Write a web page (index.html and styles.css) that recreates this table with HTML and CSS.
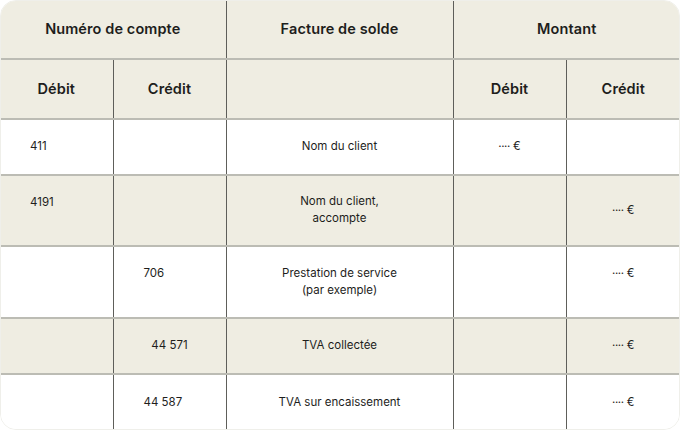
FILE: index.html
```html
<!DOCTYPE html>
<html lang="fr">
<head>
<meta charset="utf-8">
<link rel="stylesheet" href="styles.css">
</head>
<body>
<div class="card">
<table class="ledger">
  <colgroup>
    <col class="c1"><col class="c2"><col class="c3"><col class="c4"><col class="c5">
  </colgroup>
  <thead>
    <tr class="h1">
      <th colspan="2">Numéro de compte</th>
      <th class="vl">Facture de solde</th>
      <th colspan="2" class="vl">Montant</th>
    </tr>
    <tr class="h2">
      <th>Débit</th>
      <th class="vl">Crédit</th>
      <th class="vl"></th>
      <th class="vl">Débit</th>
      <th class="vl">Crédit</th>
    </tr>
  </thead>
  <tbody>
    <tr class="r1 white">
      <td class="left">411</td>
      <td class="vl"></td>
      <td class="vl center">Nom du client</td>
      <td class="vl center"><span class="dots">····</span> €</td>
      <td class="vl"></td>
    </tr>
    <tr class="r2 beige">
      <td class="left top">4191</td>
      <td class="vl"></td>
      <td class="vl center">Nom du client,<br>accompte</td>
      <td class="vl"></td>
      <td class="vl center"><span class="dots">····</span> €</td>
    </tr>
    <tr class="r3 white">
      <td></td>
      <td class="vl left top">706</td>
      <td class="vl center">Prestation de service<br>(par exemple)</td>
      <td class="vl"></td>
      <td class="vl center top"><span class="dots">····</span> €</td>
    </tr>
    <tr class="r4 beige">
      <td></td>
      <td class="vl center">44 571</td>
      <td class="vl center">TVA collectée</td>
      <td class="vl"></td>
      <td class="vl center"><span class="dots">····</span> €</td>
    </tr>
    <tr class="r5 white last">
      <td></td>
      <td class="vl left">44 587</td>
      <td class="vl center">TVA sur encaissement</td>
      <td class="vl"></td>
      <td class="vl center"><span class="dots">····</span> €</td>
    </tr>
  </tbody>
</table>
</div>
</body>
</html>
```
FILE: styles.css
```css
html, body {
  margin: 0;
  padding: 0;
  background: #ffffff;
}
body {
  font-family: Inter, "Noto Sans", sans-serif;
  color: #1e1e1c;
  width: 680px;
  height: 430px;
}
.card {
  width: 680px;
  height: 430px;
  box-sizing: border-box;
  border: 1px solid #efefea;
  border-radius: 16px;
  overflow: hidden;
  background: #ffffff;
}
.ledger {
  width: 680px;
  margin: -1px;
  border-collapse: collapse;
  table-layout: fixed;
}
.c1, .c2, .c4 { width: 113px; }
.c3 { width: 227px; }
.c5 { width: 114px; }
th, td {
  padding: 0 0 1px 0;
  border-bottom: 2px solid #bcbcb4;
  vertical-align: middle;
}
.vl { border-left: 1px solid #5e5e5a; }
thead tr { background: #efede2; }
th {
  font-size: 14.5px;
  font-weight: 600;
  text-align: center;
  letter-spacing: 0.1px;
}
.h1 { height: 59px; }
.h2 { height: 60px; }
.r1 { height: 56px; }
.r2 { height: 71px; }
.r3 { height: 72px; }
.r4 { height: 56px; }
.r5 { height: 56px; }
.last td { border-bottom: none; }
.white { background: #ffffff; }
.beige { background: #efede2; }
td {
  font-size: 11.5px;
  line-height: 17px;
  font-weight: 400;
}
.dots { letter-spacing: -0.4px; }
td.left { text-align: left; padding-left: 30px; }
td.center { text-align: center; }
td.top { vertical-align: top; padding-top: 18px; }
```
